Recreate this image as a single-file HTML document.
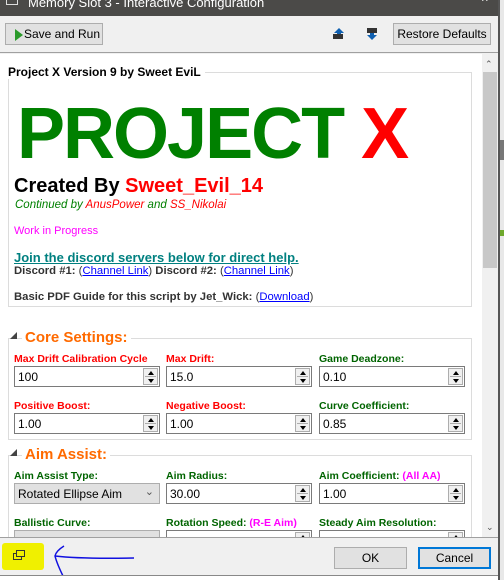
<!DOCTYPE html>
<html><head><meta charset="utf-8"><style>
*{margin:0;padding:0;box-sizing:border-box}
body{width:504px;height:580px;overflow:hidden;background:#f0f0f0;font-family:"Liberation Sans",sans-serif;position:relative}
.a{position:absolute}
.lbl{position:absolute;font-size:10.5px;font-weight:bold;white-space:nowrap}
.r{color:#f00}.g{color:#006400}.m{color:#f0f}
.inp{position:absolute;height:21px;width:146px;background:#fff;border:1px solid #7a7a7a;font-size:12px;padding:3px 0 0 3px}
.sp{position:absolute;right:1px;top:1px;width:15px;height:17px;border:1px solid #adadad;background:#f0f0f0}
.sp:before{content:"";position:absolute;left:4px;top:2px;border:3px solid transparent;border-bottom:4px solid #000;border-top:0}
.sp:after{content:"";position:absolute;left:4px;top:10px;border:3px solid transparent;border-top:4px solid #000;border-bottom:0}
.sp i{position:absolute;left:1px;right:1px;top:7px;height:1px;background:#adadad}
.grp{position:absolute;border:1px solid #dcdcdc}
.hdr{position:absolute;color:#ff6a00;font-weight:bold;font-size:15px;background:#fff;padding:0 3px}
.tri{position:absolute;width:0;height:0;border-left:7px solid transparent;border-bottom:7px solid #444}
.btn{position:absolute;background:#e1e1e1;border:1px solid #adadad;font-size:12px;text-align:center}
</style></head><body>
<div class="a" style="left:0;top:0;width:504px;height:16px;background:#4b4a48;color:#fff;font-size:13px;line-height:6px;padding-left:28px;overflow:hidden">Memory Slot 3 - Interactive Configuration</div>
<div class="a" style="left:6px;top:0;width:12px;height:5px;border:1px solid #ddd;border-top:0"></div>
<div class="a" style="left:482px;top:-6px;color:#fff;font-size:12px">^</div>
<div class="a" style="left:498px;top:0;width:6px;height:580px;background:#e8e8e8;border-left:2px solid #555"></div>
<div class="a" style="left:500px;top:140px;width:4px;height:20px;background:#777"></div>
<div class="a" style="left:500px;top:230px;width:4px;height:6px;background:#6ea82c"></div>
<div class="btn" style="left:5px;top:23px;width:98px;height:22px;line-height:20px;padding-left:16px">Save and Run</div>
<div class="a" style="left:15px;top:29px;border-top:6px solid transparent;border-bottom:6px solid transparent;border-left:8px solid #2a9a2a"></div>
<div class="a" style="left:334px;top:28px;width:0;height:5px;border:5px solid transparent;border-top:0;border-bottom:5px solid #1060b0"></div>
<div class="a" style="left:337px;top:32px;width:4px;height:2px;background:#1060b0"></div>
<div class="a" style="left:333px;top:34px;width:10px;height:5px;background:#333"></div>
<div class="a" style="left:367px;top:28px;width:10px;height:5px;background:#333"></div>
<div class="a" style="left:370px;top:33px;width:4px;height:2px;background:#1060b0"></div>
<div class="a" style="left:367px;top:35px;width:0;border:5px solid transparent;border-bottom:0;border-top:5px solid #1060b0"></div>
<div class="btn" style="left:393px;top:23px;width:98px;height:22px;line-height:20px">Restore Defaults</div>
<div class="a" style="left:0;top:52px;width:498px;height:1px;background:#a0a0a0"></div>
<div class="a" style="left:0;top:54px;width:482px;height:484px;background:#fff;overflow:hidden">
 <div class="grp" style="left:8px;top:18px;width:464px;height:235px"></div>
 <div class="a" style="left:8px;top:11px;background:#fff;padding-right:4px;font-size:12px;font-weight:bold">Project X Version 9 by Sweet EviL</div>
 <div class="a" style="left:17px;top:40px;font-size:72px;font-weight:bold;color:#008000;line-height:80px;letter-spacing:-2px;white-space:nowrap">PROJECT <span style="color:#f00">X</span></div>
 <div class="a" style="left:14px;top:121px;font-size:20px;font-weight:bold;white-space:nowrap">Created By <span style="color:#f00">Sweet_Evil_14</span></div>
 <div class="a" style="left:15px;top:145px;font-size:11.5px;font-style:italic;color:#008000">Continued by <span class="r">AnusPower</span> and <span class="r">SS_Nikolai</span></div>
 <div class="a" style="left:14px;top:171px;font-size:11px;color:#f0f">Work in Progress</div>
 <div class="a" style="left:14px;top:196px;font-size:13px;font-weight:bold;color:#008080;text-decoration:underline">Join the discord servers below for direct help.</div>
 <div class="a" style="left:14px;top:211px;font-size:11.3px;font-weight:bold;color:#333;white-space:nowrap">Discord #1: <span style="font-weight:normal">(<u style="color:#00f">Channel Link</u>)</span> Discord #2: <span style="font-weight:normal">(<u style="color:#00f">Channel Link</u>)</span></div>
 <div class="a" style="left:14px;top:237px;font-size:11.3px;font-weight:bold;color:#333;white-space:nowrap">Basic PDF Guide for this script by Jet_Wick: <span style="font-weight:normal">(<u style="color:#00f">Download</u>)</span></div>

 <div class="grp" style="left:8px;top:284px;width:464px;height:102px"></div>
 <div class="tri" style="left:10px;top:278px"></div>
 <div class="hdr" style="left:22px;top:275px">Core Settings:</div>
 <div class="lbl r" style="left:14px;top:299px">Max Drift Calibration Cycle</div>
 <div class="lbl r" style="left:166px;top:299px">Max Drift:</div>
 <div class="lbl g" style="left:319px;top:299px">Game Deadzone:</div>
 <div class="inp" style="left:14px;top:312px">100<div class="sp"><i></i></div></div>
 <div class="inp" style="left:166px;top:312px">15.0<div class="sp"><i></i></div></div>
 <div class="inp" style="left:319px;top:312px">0.10<div class="sp"><i></i></div></div>
 <div class="lbl r" style="left:14px;top:346px">Positive Boost:</div>
 <div class="lbl r" style="left:166px;top:346px">Negative Boost:</div>
 <div class="lbl g" style="left:319px;top:346px">Curve Coefficient:</div>
 <div class="inp" style="left:14px;top:359px">1.00<div class="sp"><i></i></div></div>
 <div class="inp" style="left:166px;top:359px">1.00<div class="sp"><i></i></div></div>
 <div class="inp" style="left:319px;top:359px">0.85<div class="sp"><i></i></div></div>

 <div class="grp" style="left:8px;top:401px;width:464px;height:120px"></div>
 <div class="tri" style="left:10px;top:395px"></div>
 <div class="hdr" style="left:22px;top:392px">Aim Assist:</div>
 <div class="lbl g" style="left:14px;top:416px">Aim Assist Type:</div>
 <div class="lbl g" style="left:166px;top:416px">Aim Radius:</div>
 <div class="lbl g" style="left:319px;top:416px">Aim Coefficient: <span class="m">(All AA)</span></div>
 <div class="inp" style="left:14px;top:429px;background:#e1e1e1;border-color:#adadad">Rotated Ellipse Aim<span class="a" style="right:5px;top:1px;font-size:11px;color:#555">&#8964;</span></div>
 <div class="inp" style="left:166px;top:429px">30.00<div class="sp"><i></i></div></div>
 <div class="inp" style="left:319px;top:429px">1.00<div class="sp"><i></i></div></div>
 <div class="lbl g" style="left:14px;top:463px">Ballistic Curve:</div>
 <div class="lbl g" style="left:166px;top:463px">Rotation Speed: <span class="m">(R-E Aim)</span></div>
 <div class="lbl g" style="left:319px;top:463px">Steady Aim Resolution:</div>
 <div class="inp" style="left:14px;top:476px;background:#e1e1e1;border-color:#adadad"></div>
 <div class="inp" style="left:166px;top:476px"><div class="sp"><i></i></div></div>
 <div class="inp" style="left:319px;top:476px"><div class="sp"><i></i></div></div>
</div>
<div class="a" style="left:482px;top:54px;width:16px;height:484px;background:#f0f0f0"></div>
<div class="a" style="left:483px;top:72px;width:14px;height:196px;background:#c8c8c8"></div>
<div class="a" style="left:485px;top:59px;font-size:9px;color:#555">&#8963;</div>
<div class="a" style="left:486px;top:522px;font-size:9px;color:#555">&#8964;</div>
<div class="a" style="left:0;top:537px;width:498px;height:1px;background:#a0a0a0"></div>
<div class="a" style="left:2px;top:543px;width:42px;height:27px;background:#f0f000;border-radius:3px"></div>
<div class="a" style="left:13px;top:553px;width:9px;height:7px;border:1px solid #333"></div>
<div class="a" style="left:16px;top:550px;width:9px;height:7px;border:1px solid #333;background:#f0f000"></div>
<svg class="a" style="left:50px;top:544px" width="90" height="36"><path d="M5 12 Q30 15 84 14 M14 2 Q6 7 5 12 Q7 20 14 34" stroke="#1010e0" stroke-width="1.5" fill="none"/></svg>
<div class="btn" style="left:334px;top:547px;width:73px;height:22px;line-height:20px">OK</div>
<div class="btn" style="left:418px;top:547px;width:73px;height:22px;line-height:18px;border:2px solid #0078d7">Cancel</div>
<div class="a" style="left:0;top:575px;width:498px;height:5px;background:#fff;border-top:1px solid #888"></div>
</body></html>
